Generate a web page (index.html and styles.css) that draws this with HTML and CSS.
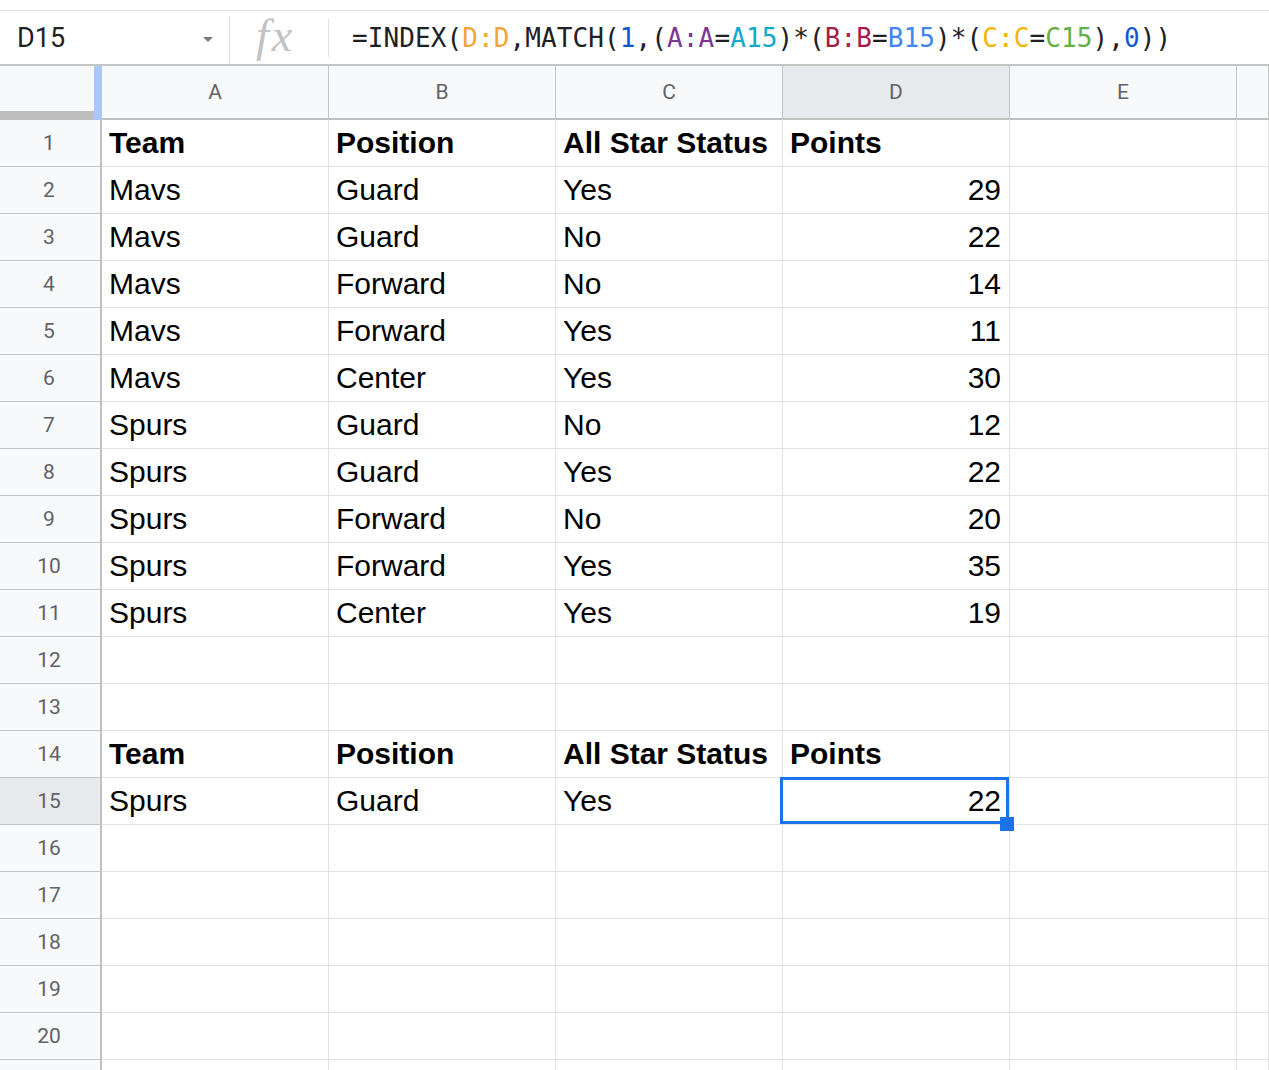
FILE: index.html
```html
<!DOCTYPE html>
<html lang="en">
<head>
  <meta charset="UTF-8" />
  <title>Sheet1</title>
  <link rel="stylesheet" href="styles.css">
</head>
<body>
  <!-- formula bar -->
  <div class="formula-bar">
    <div class="name-box">
      <span>D15</span>
      <span class="caret"></span>
    </div>
    <div class="divider"></div>
    <div class="fx">fx</div>
    <div class="divider short"></div>
    <div class="formula">=INDEX(<span class="ref-1">D:D</span>,MATCH(<span class="num-lit">1</span>,(<span class="ref-2">A:A</span>=<span class="ref-3">A15</span>)*(<span class="ref-4">B:B</span>=<span class="ref-5">B15</span>)*(<span class="ref-6">C:C</span>=<span class="ref-7">C15</span>),<span class="num-lit">0</span>))</div>
  </div>

  <!-- grid -->
  <div class="sheet">
    <div class="corner"><div class="corner-fill"></div><div class="freeze-col"></div></div>
    <div class="col-head">A</div>
    <div class="col-head">B</div>
    <div class="col-head">C</div>
    <div class="col-head active">D</div>
    <div class="col-head">E</div>
    <div class="col-head"></div>

    <div class="row-head">1</div>
    <div class="cell bold">Team</div><div class="cell bold">Position</div><div class="cell bold">All Star Status</div><div class="cell bold">Points</div><div class="cell"></div><div class="cell"></div>

    <div class="row-head">2</div>
    <div class="cell">Mavs</div><div class="cell">Guard</div><div class="cell">Yes</div><div class="cell num">29</div><div class="cell"></div><div class="cell"></div>

    <div class="row-head">3</div>
    <div class="cell">Mavs</div><div class="cell">Guard</div><div class="cell">No</div><div class="cell num">22</div><div class="cell"></div><div class="cell"></div>

    <div class="row-head">4</div>
    <div class="cell">Mavs</div><div class="cell">Forward</div><div class="cell">No</div><div class="cell num">14</div><div class="cell"></div><div class="cell"></div>

    <div class="row-head">5</div>
    <div class="cell">Mavs</div><div class="cell">Forward</div><div class="cell">Yes</div><div class="cell num">11</div><div class="cell"></div><div class="cell"></div>

    <div class="row-head">6</div>
    <div class="cell">Mavs</div><div class="cell">Center</div><div class="cell">Yes</div><div class="cell num">30</div><div class="cell"></div><div class="cell"></div>

    <div class="row-head">7</div>
    <div class="cell">Spurs</div><div class="cell">Guard</div><div class="cell">No</div><div class="cell num">12</div><div class="cell"></div><div class="cell"></div>

    <div class="row-head">8</div>
    <div class="cell">Spurs</div><div class="cell">Guard</div><div class="cell">Yes</div><div class="cell num">22</div><div class="cell"></div><div class="cell"></div>

    <div class="row-head">9</div>
    <div class="cell">Spurs</div><div class="cell">Forward</div><div class="cell">No</div><div class="cell num">20</div><div class="cell"></div><div class="cell"></div>

    <div class="row-head">10</div>
    <div class="cell">Spurs</div><div class="cell">Forward</div><div class="cell">Yes</div><div class="cell num">35</div><div class="cell"></div><div class="cell"></div>

    <div class="row-head">11</div>
    <div class="cell">Spurs</div><div class="cell">Center</div><div class="cell">Yes</div><div class="cell num">19</div><div class="cell"></div><div class="cell"></div>

    <div class="row-head">12</div>
    <div class="cell"></div><div class="cell"></div><div class="cell"></div><div class="cell"></div><div class="cell"></div><div class="cell"></div>

    <div class="row-head">13</div>
    <div class="cell"></div><div class="cell"></div><div class="cell"></div><div class="cell"></div><div class="cell"></div><div class="cell"></div>

    <div class="row-head">14</div>
    <div class="cell bold">Team</div><div class="cell bold">Position</div><div class="cell bold">All Star Status</div><div class="cell bold">Points</div><div class="cell"></div><div class="cell"></div>

    <div class="row-head active">15</div>
    <div class="cell">Spurs</div><div class="cell">Guard</div><div class="cell">Yes</div>
    <div class="cell num selected">22<div class="selection"></div><div class="fill-handle"></div></div>
    <div class="cell"></div><div class="cell"></div>

    <div class="row-head">16</div>
    <div class="cell"></div><div class="cell"></div><div class="cell"></div><div class="cell"></div><div class="cell"></div><div class="cell"></div>

    <div class="row-head">17</div>
    <div class="cell"></div><div class="cell"></div><div class="cell"></div><div class="cell"></div><div class="cell"></div><div class="cell"></div>

    <div class="row-head">18</div>
    <div class="cell"></div><div class="cell"></div><div class="cell"></div><div class="cell"></div><div class="cell"></div><div class="cell"></div>

    <div class="row-head">19</div>
    <div class="cell"></div><div class="cell"></div><div class="cell"></div><div class="cell"></div><div class="cell"></div><div class="cell"></div>

    <div class="row-head">20</div>
    <div class="cell"></div><div class="cell"></div><div class="cell"></div><div class="cell"></div><div class="cell"></div><div class="cell"></div>

    <!-- next row, scrolled just past the bottom edge -->
    <div class="row-head"></div>
    <div class="cell"></div><div class="cell"></div><div class="cell"></div><div class="cell"></div><div class="cell"></div><div class="cell"></div>
  </div>
</body>
</html>
```

FILE: styles.css
```css
* {
  box-sizing: border-box;
}

body {
  margin: 0;
  background: #fff;
  color: #000;
  overflow: hidden;
  height: 1070px;
}

/* ---- formula bar ---- */

.formula-bar {
  margin-top: 10px;
  height: 56px;
  border-top: 1px solid #e1e1e1;
  border-bottom: 2px solid #c4c4c4;
  display: flex;
  align-items: center;
}

.name-box {
  width: 229px;
  padding: 0 16px 0 17px;
  display: flex;
  align-items: center;
  justify-content: space-between;
  font-family: Roboto, sans-serif;
  font-size: 27px;
  color: #202124;
}

.caret {
  width: 0;
  height: 0;
  border-left: 5px solid transparent;
  border-right: 5px solid transparent;
  border-top: 5px solid #7a7a7a;
  margin-top: 3px;
}

.divider {
  width: 1px;
  height: 48px;
  background: #e0e0e0;
  margin-top: 4px;
}

.divider.short {
  height: 38px;
  margin-top: 0;
}

.fx {
  width: 98px;
  padding-left: 26px;
  font-family: "Liberation Serif", serif;
  font-style: italic;
  font-size: 46px;
  letter-spacing: 3px;
  color: #c2c2c2;
  line-height: 1;
  margin-top: -4px;
}

.formula {
  padding-left: 23px;
  font-family: "DejaVu Sans Mono", "Liberation Mono", monospace;
  font-size: 26px;
  letter-spacing: 0.1px;
  color: #202124;
  white-space: nowrap;
}

.ref-1 { color: #f5a33b; }
.ref-2 { color: #7e3794; }
.ref-3 { color: #11a9cc; }
.ref-4 { color: #a61d4c; }
.ref-5 { color: #4285f4; }
.ref-6 { color: #f4b400; }
.ref-7 { color: #65b045; }
.num-lit { color: #1155cc; }

/* ---- grid ---- */

.sheet {
  display: grid;
  grid-template-columns: 102px repeat(5, 227px) 1fr;
  grid-template-rows: 54px;
  grid-auto-rows: 47px;
}

.corner {
  display: flex;
  background: #f8f9fa;
}

.corner-fill {
  flex: 1;
  border-bottom: 9px solid #bdbdbd;
}

.freeze-col {
  width: 8px;
  background: #a8c7fa;
}

.col-head {
  background: #f8f9fa;
  border-right: 1px solid #c4c7c5;
  border-bottom: 2px solid #c0c0c0;
  font-family: Roboto, sans-serif;
  font-size: 21px;
  color: #5f6368;
  text-align: center;
  line-height: 52px;
}

.col-head.active,
.row-head.active {
  background: #e8eaed;
}

.row-head {
  background: #f8f9fa;
  border-right: 2px solid #c0c0c0;
  border-bottom: 1px solid #c4c4c4;
  font-family: Roboto, sans-serif;
  font-size: 21px;
  color: #5f6368;
  text-align: center;
  line-height: 46px;
  padding-right: 2px;
}

.cell {
  border-right: 1px solid #e2e2e3;
  border-bottom: 1px solid #e2e2e3;
  padding: 0 8px 0 7px;
  font-family: "Liberation Sans", Arial, sans-serif;
  font-size: 30px;
  line-height: 46px;
  white-space: nowrap;
  overflow: visible;
}

.cell.bold {
  font-weight: bold;
}

.cell.num {
  text-align: right;
}

.cell.selected {
  position: relative;
}

.selection {
  position: absolute;
  top: -1px;
  left: -3px;
  right: 0;
  bottom: 0;
  border: 3px solid #1a73e8;
}

.fill-handle {
  position: absolute;
  right: -5px;
  bottom: -7px;
  width: 14px;
  height: 14px;
  background: #1a73e8;
}
```
